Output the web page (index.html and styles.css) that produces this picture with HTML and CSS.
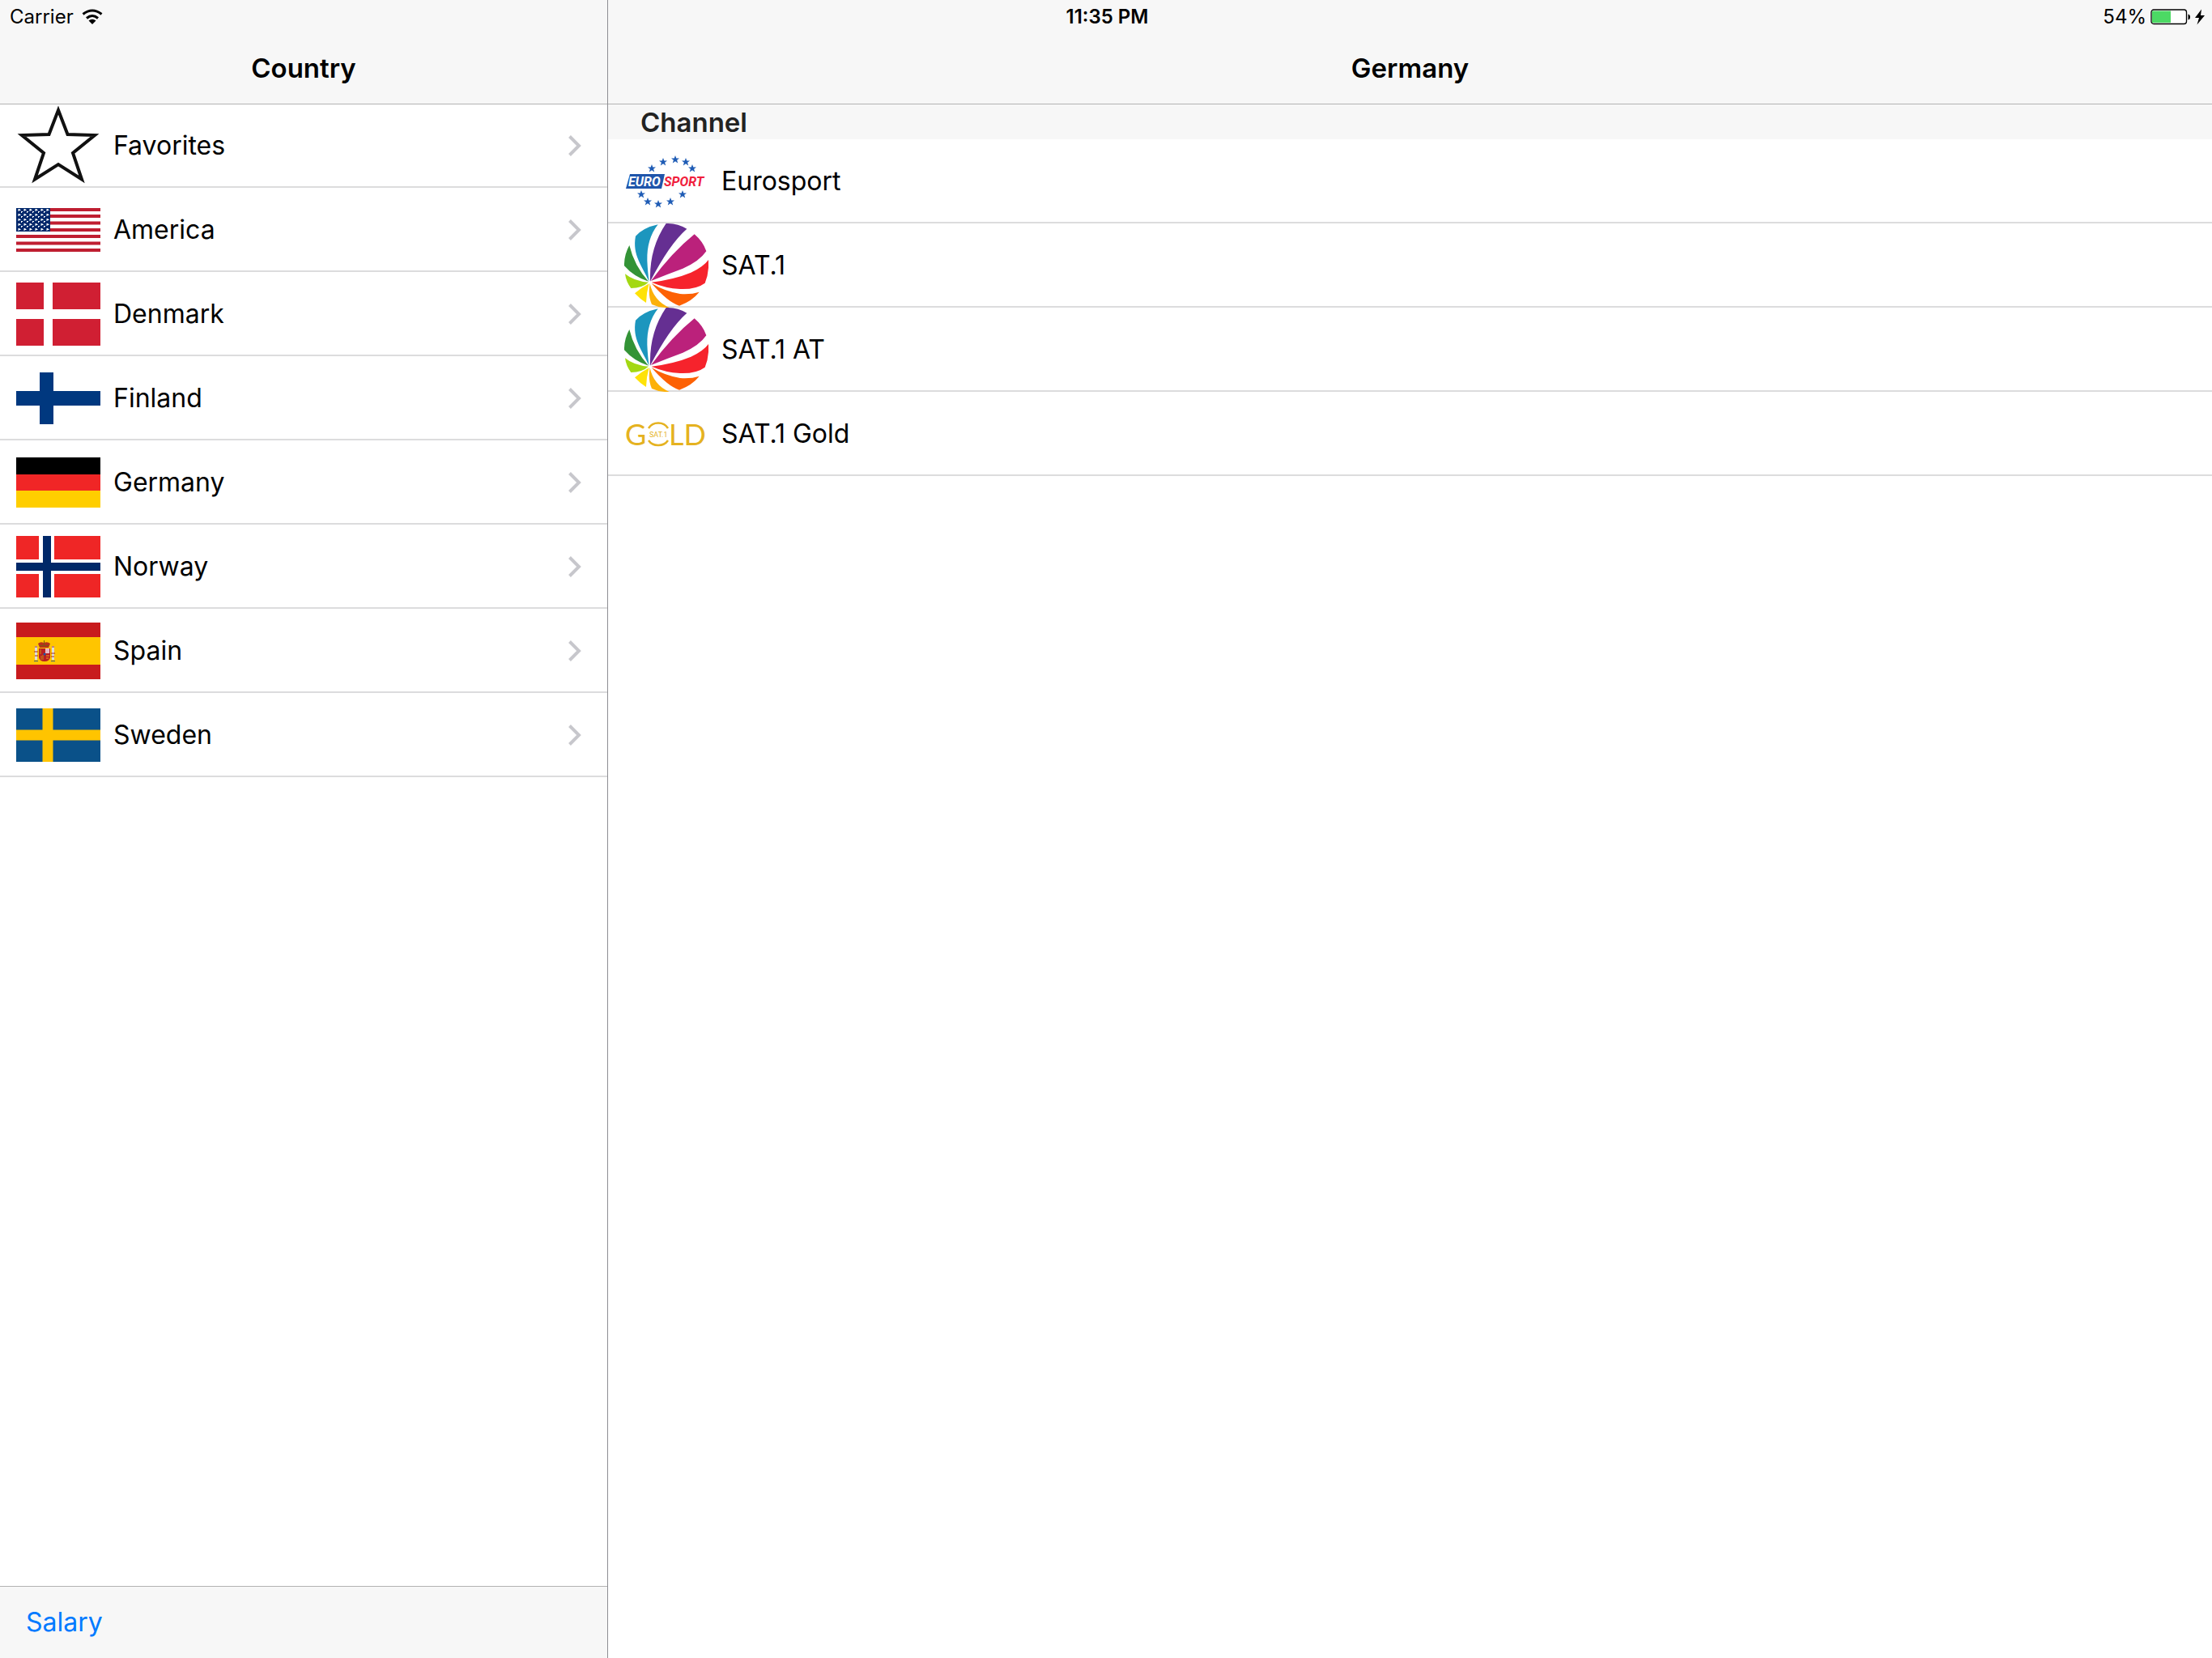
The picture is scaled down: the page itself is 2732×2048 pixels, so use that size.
FILE: index.html
```html
<!DOCTYPE html>
<html lang="en">
<head>
    <meta charset="UTF-8">
    <meta name="viewport" content="width=device-width, initial-scale=1.0">
    <title>Channels</title>
    <link rel="stylesheet" href="styles.css">
</head>
<body>
    <div class="status-bar">
        <div class="status-left">
            <span>Carrier</span>
            <svg class="wifi" width="26" height="20" viewBox="0 0 26 20">
                <path d="M1.500 6.500Q13 -2.500 24.500 6.500M6 11.500Q13 5.500 20 11.500" fill="none" stroke="#000" stroke-width="3"/>
                <path d="M8.500 14.500Q13 11 17.500 14.500L13 19z"/>
            </svg>
        </div>
        <div class="status-time">11:35 PM</div>
        <div class="status-right">
            <span>54%</span>
            <svg width="50" height="20" viewBox="0 0 50 20">
                <rect x="1" y="1" width="43.500" height="17.500" rx="3" fill="#fff" stroke="#000" stroke-width="1.300"/>
                <rect x="2" y="2.500" width="23" height="14.500" fill="#4cd964"/>
                <path d="M46.500 6.500Q49 7 49 10T46.500 13.500z"/>
            </svg>
            <svg width="12" height="20" viewBox="0 0 12 20">
                <path d="M8 .5L0 11H5L2.500 19.500L12 8H7z"/>
            </svg>
        </div>
    </div>

    <div class="split-view">
        <nav class="sidebar">
            <header class="nav-bar"><h1>Country</h1></header>
            <ul class="list">
                <li><a class="row" href="#favorites">
                    <svg class="thumb" viewBox="0 0 104 104">
                        <path d="M52 8L63.500 38L97 39L70 61L81 93.500L52 75L23 93.500L34 61L7 39L40.500 38z" fill="none" stroke="#111" stroke-width="4"/>
                    </svg>
                    <span class="row-title">Favorites</span>
                    <svg class="chevron" viewBox="0 0 16 26"><path d="M1.500 1.500L13 13L1.500 24.500"/></svg>
                </a></li>
                <li><a class="row" href="#america">
                    <svg class="thumb" viewBox="0 0 104 54">
                        <defs>
                            <pattern id="stars" width="7" height="6" patternUnits="userSpaceOnUse">
                                <path d="M2.500 1h2v1h1v1h-2v1h-1v-2zM6 4h1v2h-1zM0 4h1v1h-1z" fill="#fff"/>
                            </pattern>
                        </defs>
                        <rect width="104" height="54" fill="#fff"/>
                        <path d="M0 2H104M0 10H104M0 18.500H104M0 27H104M0 35H104M0 43.500H104M0 52H104" stroke="#bf1e31" stroke-width="4"/>
                        <rect width="42" height="29" fill="#02286b"/>
                        <rect x="1" y="1" width="40" height="27" fill="url(#stars)"/>
                    </svg>
                    <span class="row-title">America</span>
                    <svg class="chevron" viewBox="0 0 16 26"><path d="M1.500 1.500L13 13L1.500 24.500"/></svg>
                </a></li>
                <li><a class="row" href="#denmark">
                    <svg class="thumb" viewBox="0 0 104 78">
                        <path d="M0 0H34V33H0zM45 0H104V33H45zM0 45H34V78H0zM45 45H104V78H45z" fill="#d01f33"/>
                    </svg>
                    <span class="row-title">Denmark</span>
                    <svg class="chevron" viewBox="0 0 16 26"><path d="M1.500 1.500L13 13L1.500 24.500"/></svg>
                </a></li>
                <li><a class="row" href="#finland">
                    <svg class="thumb" viewBox="0 0 104 64">
                        <path d="M29 0H46V23H104V41H46V64H29V41H0V23H29z" fill="#00387f"/>
                    </svg>
                    <span class="row-title">Finland</span>
                    <svg class="chevron" viewBox="0 0 16 26"><path d="M1.500 1.500L13 13L1.500 24.500"/></svg>
                </a></li>
                <li><a class="row" href="#germany">
                    <svg class="thumb" viewBox="0 0 104 62">
                        <rect width="104" height="21"/>
                        <rect y="21" width="104" height="20" fill="#f02626"/>
                        <rect y="41" width="104" height="21" fill="#ffce00"/>
                    </svg>
                    <span class="row-title">Germany</span>
                    <svg class="chevron" viewBox="0 0 16 26"><path d="M1.500 1.500L13 13L1.500 24.500"/></svg>
                </a></li>
                <li><a class="row" href="#norway">
                    <svg class="thumb" viewBox="0 0 104 76">
                        <path d="M0 0H28V29H0zM47 0H104V29H47zM0 47H28V76H0zM47 47H104V76H47z" fill="#ef2626"/>
                        <path d="M33 0H43V33H104V43H43V76H33V43H0V33H33z" fill="#002868"/>
                    </svg>
                    <span class="row-title">Norway</span>
                    <svg class="chevron" viewBox="0 0 16 26"><path d="M1.500 1.500L13 13L1.500 24.500"/></svg>
                </a></li>
                <li><a class="row" href="#spain">
                    <svg class="thumb" viewBox="0 0 104 70">
                        <rect width="104" height="70" fill="#c81b1d"/>
                        <rect y="18" width="104" height="34" fill="#ffc500"/>
                        <!-- crown, shield and the two pillars -->
                        <path d="M27 26Q30 23 34 25Q39 23 42 26L40 31H29z" fill="#b5321c"/>
                        <path d="M34.500 22V29M29 28.500H40" stroke="#7c5a12" fill="none"/>
                        <path d="M28 32H42V43Q41 48 35 48Q29 48 28 43z" fill="#b91f22"/>
                        <path d="M36 32H41V38H36z" fill="#e9b9c5"/>
                        <path d="M30 33V39M31 41V46M33 40V46" stroke="#c98d10" fill="none"/>
                        <path d="M37 41H41M37 44H40" stroke="#f0a01a" fill="none"/>
                        <circle cx="35" cy="39" r="1.500" fill="#1c5ba8"/>
                        <path d="M24.500 29V46M45.500 29V46" stroke="#ddd" stroke-width="3"/>
                        <path d="M23 30H26M44 30H47M22 36H27M43 38H48M23 41H27M43 42H47" stroke="#a8291f"/>
                        <path d="M22 47.500H27M43 47.500H48" stroke="#3d5d7a"/>
                    </svg>
                    <span class="row-title">Spain</span>
                    <svg class="chevron" viewBox="0 0 16 26"><path d="M1.500 1.500L13 13L1.500 24.500"/></svg>
                </a></li>
                <li><a class="row" href="#sweden">
                    <svg class="thumb" viewBox="0 0 104 66">
                        <rect width="104" height="66" fill="#0a5189"/>
                        <path d="M32.500 0H45.500V26.500H104V39.500H45.500V66H32.500V39.500H0V26.500H32.500z" fill="#ffc400"/>
                    </svg>
                    <span class="row-title">Sweden</span>
                    <svg class="chevron" viewBox="0 0 16 26"><path d="M1.500 1.500L13 13L1.500 24.500"/></svg>
                </a></li>
            </ul>
            <footer class="toolbar">
                <button type="button" class="toolbar-button">Salary</button>
            </footer>
        </nav>

        <main class="detail">
            <header class="nav-bar"><h1>Germany</h1></header>
            <h2 class="section-title">Channel</h2>
            <ul class="list">
                <li><a class="row" href="#eurosport">
                    <svg class="thumb" viewBox="0 0 104 104">
                        <defs>
                            <path id="star" d="M0 -5L1.300 -1.600L5 -1.500L2.100 .8L3.200 4.500L0 2.300L-3.200 4.500L-2.100 .8L-5 -1.500L-1.300 -1.600z" fill="#1f5cb5"/>
                        </defs>
                        <use href="#star" x="34" y="36"/><use href="#star" x="48" y="28"/><use href="#star" x="63" y="25"/>
                        <use href="#star" x="76" y="28"/><use href="#star" x="84" y="36"/>
                        <use href="#star" x="21" y="68"/><use href="#star" x="29" y="77"/><use href="#star" x="42" y="80"/>
                        <use href="#star" x="57" y="77"/><use href="#star" x="72" y="68"/>
                        <path d="M7 43H50L46 61H2z" fill="#1f55ab"/>
                        <text class="euro" x="5" y="58">EURO</text>
                        <text class="sport" x="49" y="58">SPORT</text>
                    </svg>
                    <span class="row-title">Eurosport</span>
                </a></li>
                <li><a class="row" href="#sat1">
                    <svg class="thumb" viewBox="63 33 312 312">
                        <g id="ball">
                            <path d="M155 248C130 190 92 150 105 80Q135 48 188 37Q146 90 148 170Q150 215 155 248z" fill="#1c96be"/>
                            <path d="M159 248Q155 125 218 33Q260 32 295 53Q230 110 159 248z" fill="#652f92"/>
                            <path d="M162 246Q240 140 323 73Q355 100 367 136Q340 175 280 200Q220 222 162 246z" fill="#bb217b"/>
                            <path d="M164 251Q250 240 310 215Q355 195 375 168Q378 215 362 254Q330 278 270 276Q215 273 164 251z" fill="#f6232c"/>
                            <path d="M164 255Q215 285 270 294Q310 297 341 287Q315 320 267 338Q225 325 164 255z" fill="#fd6104"/>
                            <path d="M158 256Q172 320 230 345Q195 347 165 333Q150 300 158 256z" fill="#fcb10a"/>
                            <path d="M155 256Q125 272 102 292Q120 312 144 327Q145 290 155 256z" fill="#fee207"/>
                            <path d="M153 251Q100 248 66 220Q70 250 88 273Q130 272 153 251z" fill="#a3d813"/>
                            <path d="M153 248Q100 190 82 114Q62 150 63 190Q100 232 153 248z" fill="#339336"/>
                        </g>
                    </svg>
                    <span class="row-title">SAT.1</span>
                </a></li>
                <li><a class="row" href="#sat1-at">
                    <svg class="thumb" viewBox="63 33 312 312"><use href="#ball"/></svg>
                    <span class="row-title">SAT.1 AT</span>
                </a></li>
                <li><a class="row" href="#sat1-gold">
                    <svg class="thumb" viewBox="0 0 104 104">
                        <text class="gold" x="1" y="66">G</text>
                        <!-- open ring around the small name -->
                        <path d="M30 45Q34 38.500 42 38.500Q50 38.500 54 45M30 60Q34 66 42 66Q50 66 54 60" fill="none" stroke="#e5b220" stroke-width="2.500"/>
                        <text class="gold-small" x="31" y="56">SAT.1</text>
                        <text class="gold" x="55" y="66">LD</text>
                    </svg>
                    <span class="row-title">SAT.1 Gold</span>
                </a></li>
            </ul>
        </main>
    </div>
</body>
</html>
```

FILE: styles.css
```css
* {
    box-sizing: border-box;
}

body {
    margin: 0;
    font-family: Inter, "Liberation Sans", sans-serif;
    font-size: 32px;
    line-height: 40px;
    color: #000;
    background: #fff;
}

/* Status bar sits on top of both navigation bars */
.status-bar {
    position: absolute;
    top: 0;
    left: 0;
    right: 0;
    z-index: 1;
    display: grid;
    grid-template-columns: 1fr auto 1fr;
    align-items: center;
    height: 41px;
    padding: 0 9px 0 12px;
    font-size: 24px;
}

.status-left,
.status-right {
    display: flex;
    align-items: center;
}

.status-left {
    gap: 10px;
}

.status-right {
    justify-content: flex-end;
    gap: 5px;
}

.status-time {
    font-weight: 600;
}

.split-view {
    display: flex;
    min-height: 100vh;
}

.sidebar {
    display: flex;
    flex-direction: column;
    width: 750px;
    max-width: 40%;
}

.detail {
    flex: 1;
    border-left: 1px solid #8e8e93;
}

.nav-bar {
    height: 128px;
    padding-top: 40px;
    background: #f7f7f7;
    box-shadow: 0 1px 0 #b2b2b2;
    position: relative;
}

.nav-bar h1 {
    margin: 0;
    font-size: 33px;
    font-weight: 600;
    line-height: 88px;
    text-align: center;
}

.section-title {
    margin: 0;
    padding: 3px 40px 1px;
    font-size: 33px;
    font-weight: 600;
    line-height: 40px;
    color: #222;
    background: #f7f7f7;
}

.list {
    margin: 0;
    padding: 0;
    list-style: none;
}

.row {
    display: flex;
    align-items: center;
    gap: 16px;
    height: 104px;
    padding: 0 32px 0 20px;
    color: #000;
    text-decoration: none;
    box-shadow: inset 0 -2px 0 #dcdcdd;
}

.row-title {
    flex: 1;
}

.thumb {
    width: 104px;
}

.chevron {
    width: 16px;
    height: 26px;
    fill: none;
    stroke: #c7c7cc;
    stroke-width: 4;
}

.toolbar {
    display: flex;
    align-items: center;
    height: 89px;
    margin-top: auto;
    padding: 0 32px;
    background: #f7f7f7;
    border-top: 1px solid #b2b2b2;
}

.toolbar-button {
    padding: 0;
    border: none;
    background: none;
    font: inherit;
    color: #007aff;
    cursor: pointer;
}

/* Channel logos */
.euro,
.sport {
    font: italic 700 16px Roboto, sans-serif;
}

.euro {
    fill: #fff;
}

.sport {
    fill: #f0203c;
}

.gold {
    font: 400 36px Lato, sans-serif;
    fill: #e5b220;
}

.gold-small {
    font: 400 9px Roboto, sans-serif;
    fill: #e5b220;
}
```
